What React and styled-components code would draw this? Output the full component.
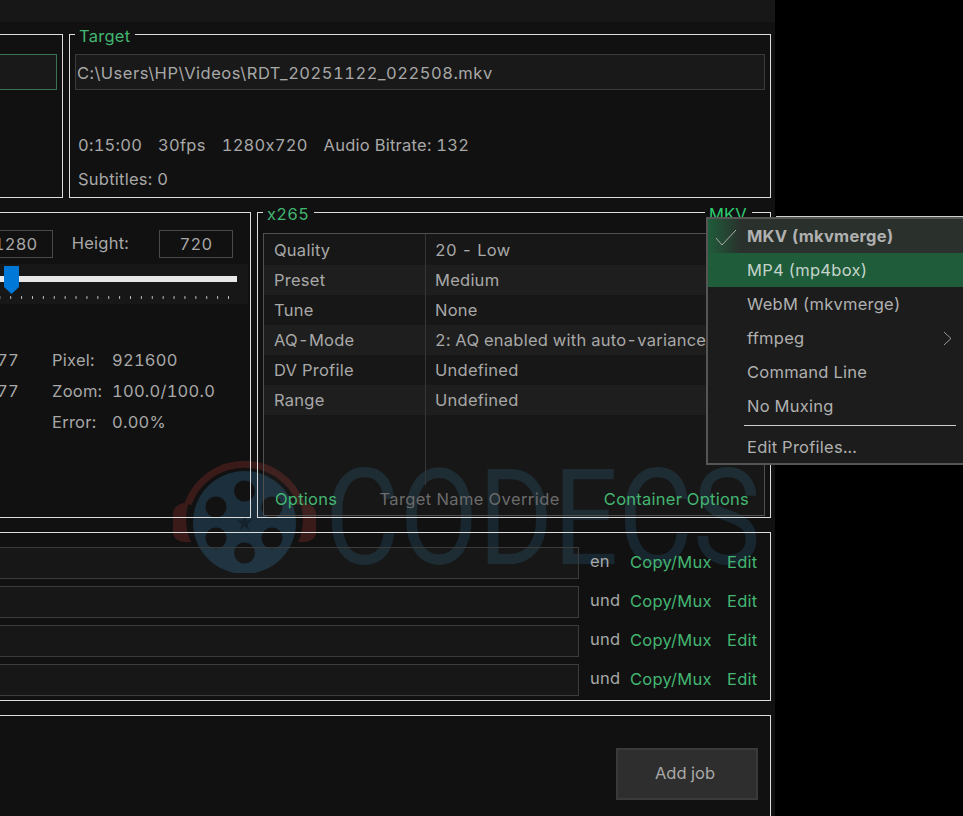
import styled, { createGlobalStyle } from "styled-components";

const GREEN = "#43b672";
const TEXT = "#a8a8a8";

const GlobalStyle = createGlobalStyle`
  html, body {
    margin: 0;
    padding: 0;
    background: #000;
  }
  body {
    font-family: Inter, "Noto Sans", "Liberation Sans", sans-serif;
    font-size: 16.5px;
    letter-spacing: 0.25px;
    font-variant-numeric: tabular-nums;
    color: ${TEXT};
  }
`;

const Screen = styled.div`
  position: relative;
  width: 963px;
  height: 816px;
  overflow: hidden;
  background: #000;
`;

const Window = styled.div`
  position: relative;
  width: 775px;
  height: 816px;
  overflow: hidden;
  background: #111;
`;

const TopBar = styled.div`
  position: relative;
  height: 22px;
  background: #171717;
`;

const Content = styled.div`
  position: relative;
  z-index: 1;
  width: 971px;
  margin-left: -200px;
  padding-top: 12px;
  display: flex;
  flex-direction: column;
  gap: 14px;
`;

const Columns = styled.div`
  display: grid;
  grid-template-columns: ${(p) => p.$left}px 1fr;
  gap: 6px;
`;

const Panel = styled.section`
  position: relative;
  box-sizing: border-box;
  border: 1px solid #ddd;
  height: ${(p) => p.$height}px;
`;

const Legend = styled.span`
  position: absolute;
  top: -10px;
  ${(p) => (p.$right ? "right: 18px;" : "left: 5px;")}
  padding: 0 5px 0 4px;
  background: #111;
  line-height: 22px;
  color: ${(p) => (p.$right ? "#2ecc71" : GREEN)};
`;

const SourcePanel = styled(Panel)`
  padding: 19px 5px 0 10px;
`;

const Field = styled.div`
  box-sizing: border-box;
  height: 36px;
  padding: 1px 1px 0;
  display: flex;
  align-items: center;
  letter-spacing: 0.53px;
  background: rgba(255, 255, 255, 0.035);
  border: 1px solid ${(p) => (p.$accent ? "#3b7452" : "#3c3c3c")};
`;

const TargetPanel = styled(Panel)`
  padding: 19px 5px 0 5px;
`;

const InfoRow = styled.div`
  display: flex;
  gap: 16px;
  padding-left: 3px;
  line-height: 24px;
  margin-top: ${(p) => p.$top}px;
`;

const SizeRow = styled.div`
  display: flex;
  align-items: center;
  justify-content: flex-end;
  padding: 17px 17px 0 0;
`;

const SizeLabel = styled.span`
  margin: 0 30px 3px 19px;
`;

const SizeBox = styled.div`
  box-sizing: border-box;
  width: ${(p) => p.$width}px;
  height: 28px;
  line-height: 27px;
  text-align: center;
  border: 1px solid #4a4a4a;
`;

const SliderBand = styled.div`
  position: relative;
  height: 40px;
  margin: 6px 2px 0 0;
  background: #171717;
`;

const SliderTrack = styled.div`
  position: absolute;
  top: 12px;
  left: 0;
  right: 11px;
  height: 6px;
  background: #e8e8e8;
`;

const SliderThumb = styled.svg`
  position: absolute;
  top: 2px;
  left: 203px;
`;

const SliderTicks = styled.div`
  position: absolute;
  top: 32px;
  left: 0;
  right: 19px;
  height: 3px;
  background: linear-gradient(to left, #bbb 1px, transparent 1px) right / 10.9px 100% repeat-x;
`;

const Stats = styled.div`
  display: grid;
  grid-template-columns: 218px 60px 1fr;
  column-gap: 33px;
  grid-auto-rows: 31px;
  align-items: center;
  margin-top: 40px;
`;

const StatValue = styled.span`
  grid-column: 3;
  margin-left: -33px;
`;

const StatLeft = styled.span`
  text-align: right;
`;

const EncoderPanel = styled(Panel)`
  padding: 20px 5px 1px 5px;
`;

const EncoderBox = styled.div`
  box-sizing: border-box;
  height: 100%;
  border: 1px solid #505050;
  background: rgba(255, 255, 255, 0.028);
`;

const SettingsTable = styled.div`
  position: relative;
  box-sizing: border-box;
  height: 251px;
  padding-top: 1px;
  &::after {
    content: "";
    position: absolute;
    top: 0;
    bottom: 0;
    left: 161px;
    width: 1px;
    background: #363636;
  }
`;

const SettingRow = styled.div`
  display: grid;
  grid-template-columns: 161px 1fr;
  height: 30px;
  line-height: 30px;
  background: ${(p) => (p.$striped ? "rgba(255, 255, 255, 0.03)" : "transparent")};
`;

const SettingName = styled.span`
  padding-left: 10px;
`;

const SettingValue = styled.span`
  padding-left: 10px;
  white-space: nowrap;
`;

const EncoderFooter = styled.div`
  display: flex;
  justify-content: space-between;
  padding: 0 15px 0 11px;
  line-height: 28px;
`;

const GreenLink = styled.a`
  color: ${GREEN};
`;

const MutedLink = styled.a`
  color: #6b6b6b;
  letter-spacing: 0.4px;
  margin-left: -2px;
`;

const TracksPanel = styled(Panel)`
  padding: 14px 12px 0 10px;
  display: flex;
  flex-direction: column;
  gap: 7px;
`;

const TrackRow = styled.div`
  display: grid;
  grid-template-columns: 1fr 51px 97px 31px;
  height: 32px;
  line-height: 30px;
`;

const TrackField = styled.div`
  border: 1px solid #3c3c3c;
  background: rgba(255, 255, 255, 0.028);
`;

const TrackLang = styled.span`
  padding-left: 11px;
  margin-top: -1px;
`;

const JobPanel = styled(Panel)`
  padding: 32px 12px 0 0;
  display: flex;
  justify-content: flex-end;
`;

const AddJob = styled.button`
  box-sizing: border-box;
  width: 142px;
  height: 52px;
  padding: 0 4px 3px 0;
  background: #2e2e2e;
  border: 2px solid #3a3a3a;
  color: ${TEXT};
  font: inherit;
`;

const Watermark = styled.div`
  position: absolute;
  top: 460px;
  left: 173px;
  z-index: 0;
  display: flex;
  pointer-events: none;
`;

const WatermarkText = styled.span`
  margin: -26px 0 0 9px;
  font-family: Roboto, sans-serif;
  font-size: 133px;
  font-weight: 400;
  line-height: 170px;
  letter-spacing: 0;
  color: #18272f;
  white-space: nowrap;
  transform: scaleX(0.86);
  transform-origin: left center;
`;

const EdgeLine = styled.div`
  position: absolute;
  top: 216px;
  left: 776px;
  right: 0;
  height: 1px;
  background: #cfcfcf;
`;

const Menu = styled.div`
  position: absolute;
  z-index: 2;
  top: 217px;
  left: 706px;
  width: 259px;
  box-sizing: border-box;
  height: 248px;
  border: 2px solid #555;
  background: #1c1c1c;
`;

const MenuItem = styled.div`
  position: relative;
  height: ${(p) => (p.$short ? 32 : 34)}px;
  padding-left: 39px;
  line-height: 35px;
  color: ${(p) => (p.$hover ? "#c4d4ca" : "#b0b0b0")};
  font-weight: ${(p) => (p.$checked ? 700 : 400)};
  background: ${(p) =>
    p.$hover
      ? "#1f5c3a"
      : p.$checked
      ? "linear-gradient(to right, #1f5c3a, #2a302c 34px)"
      : "transparent"};
`;

const MenuSeparator = styled.div`
  height: 1px;
  margin: 2px 7px 4px 36px;
  background: #ccc;
`;

const MenuGlyph = styled.svg`
  position: absolute;
  top: ${(p) => p.$top}px;
  ${(p) => (p.$end ? "right: 11px;" : "left: 7px;")}
`;

const settings = [
  ["Quality", "20 - Low"],
  ["Preset", "Medium"],
  ["Tune", "None"],
  ["AQ-Mode", "2: AQ enabled with auto-variance"],
  ["DV Profile", "Undefined"],
  ["Range", "Undefined"],
];

const tracks = ["en", "und", "und", "und"];

function CodecsLogo() {
  const holes = [
    [71.5, 31],
    [71.5, 93],
    [43, 47],
    [99, 47],
    [43, 78],
    [99, 78],
  ];
  return (
    <svg width="143" height="113" viewBox="0 0 143 113">
      <path d="M15 44A60 60 0 0 1 128 44" fill="none" stroke="#3a1b19" strokeWidth="7" />
      <path d="M16 42C6 43 0 47 0 54V72C0 79 6 83 18 82A55 55 0 0 1 16 42Z" fill="#3a1b19" />
      <path d="M127 42C137 43 143 47 143 54V72C143 79 137 83 125 82A55 55 0 0 0 127 42Z" fill="#3a1b19" />
      <circle cx="71.5" cy="62.5" r="51.5" fill="#1b2f3d" />
      {holes.map(([cx, cy]) => (
        <circle key={`${cx}-${cy}`} cx={cx} cy={cy} r="10.5" fill="#121212" />
      ))}
      <path d="M71.5 55L73.5 60.5H79L74.5 64L76 70L71.5 66.5L67 70L68.5 64L64 60.5H69.5Z" fill="#14222c" />
    </svg>
  );
}

export default function App() {
  return (
    <Screen>
      <GlobalStyle />
      <Window>
        <TopBar />
        <Watermark>
          <CodecsLogo />
          <WatermarkText>CODECS</WatermarkText>
        </Watermark>
        <Content>
          <Columns $left={263}>
            <SourcePanel $height={164}>
              <Field $accent />
            </SourcePanel>
            <TargetPanel $height={164}>
              <Legend>Target</Legend>
              <Field>C:\Users\HP\Videos\RDT_20251122_022508.mkv</Field>
              <InfoRow $top={43}>
                <span>0:15:00</span>
                <span>30fps</span>
                <span>1280x720</span>
                <span>Audio Bitrate: 132</span>
              </InfoRow>
              <InfoRow $top={10}>
                <span>Subtitles: 0</span>
              </InfoRow>
            </TargetPanel>
          </Columns>

          <Columns $left={451}>
            <Panel $height={306}>
              <SizeRow>
                <SizeBox $width={74}>1280</SizeBox>
                <SizeLabel>Height:</SizeLabel>
                <SizeBox $width={74}>720</SizeBox>
              </SizeRow>
              <SliderBand>
                <SliderTrack />
                <SliderThumb width="15" height="28" viewBox="0 0 15 28">
                  <path d="M0 0H15V21L7.5 28L0 21Z" fill="#0078d7" />
                </SliderThumb>
                <SliderTicks />
              </SliderBand>
              <Stats>
                <StatLeft>77</StatLeft>
                <span>Pixel:</span>
                <StatValue>921600</StatValue>
                <StatLeft>77</StatLeft>
                <span>Zoom:</span>
                <StatValue>100.0/100.0</StatValue>
                <span />
                <span>Error:</span>
                <StatValue>0.00%</StatValue>
              </Stats>
            </Panel>
            <EncoderPanel $height={306}>
              <Legend>x265</Legend>
              <Legend $right>MKV</Legend>
              <EncoderBox>
                <SettingsTable>
                  {settings.map(([name, value], i) => (
                    <SettingRow key={name} $striped={i % 2 === 1}>
                      <SettingName>{name}</SettingName>
                      <SettingValue>{value}</SettingValue>
                    </SettingRow>
                  ))}
                </SettingsTable>
                <EncoderFooter>
                  <GreenLink>Options</GreenLink>
                  <MutedLink>Target Name Override</MutedLink>
                  <GreenLink>Container Options</GreenLink>
                </EncoderFooter>
              </EncoderBox>
            </EncoderPanel>
          </Columns>

          <TracksPanel $height={169}>
            {tracks.map((lang, i) => (
              <TrackRow key={i}>
                <TrackField />
                <TrackLang>{lang}</TrackLang>
                <GreenLink>Copy/Mux</GreenLink>
                <GreenLink>Edit</GreenLink>
              </TrackRow>
            ))}
          </TracksPanel>

          <JobPanel $height={140}>
            <AddJob>Add job</AddJob>
          </JobPanel>
        </Content>
      </Window>

      <EdgeLine />
      <Menu>
        <MenuItem $checked>
          <MenuGlyph $top={10} width="22" height="18" viewBox="0 0 22 18">
            <path d="M1 9L7 16L21 1" fill="none" stroke="#aaa" strokeWidth="1" />
          </MenuGlyph>
          MKV (mkvmerge)
        </MenuItem>
        <MenuItem $hover>MP4 (mp4box)</MenuItem>
        <MenuItem>WebM (mkvmerge)</MenuItem>
        <MenuItem>
          ffmpeg
          <MenuGlyph $end $top={10} width="9" height="15" viewBox="0 0 9 15">
            <path d="M1 1L8 7.5L1 14" fill="none" stroke="#999" strokeWidth="1" />
          </MenuGlyph>
        </MenuItem>
        <MenuItem>Command Line</MenuItem>
        <MenuItem>No Muxing</MenuItem>
        <MenuSeparator />
        <MenuItem $short>Edit Profiles...</MenuItem>
      </Menu>
    </Screen>
  );
}
